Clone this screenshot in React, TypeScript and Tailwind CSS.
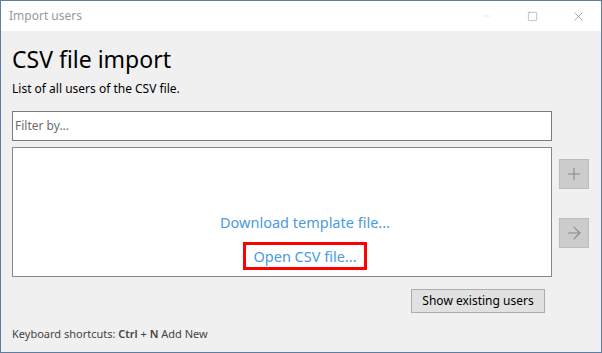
import { Minus, Square, X, Plus, ArrowRight } from "lucide-react";

const font = "font-['Noto_Sans','Open_Sans',sans-serif]";

export default function App() {
  return (
    <div className={`w-[602px] h-[353px] border border-[#5d7f9f] bg-[#f0f0f0] flex flex-col ${font}`}>
      {/* Title bar */}
      <div className="h-[30px] bg-white flex items-center justify-between pl-2">
        <span className="text-[12px] text-[#999999]">Import users</span>
        <div className="flex h-full">
          <div className="w-[46px] flex items-center justify-center text-[#d0d0d0]">
            <Minus size={12} strokeWidth={1} />
          </div>
          <div className="w-[46px] flex items-center justify-center text-[#777777]">
            <Square size={11} strokeWidth={1} />
          </div>
          <div className="w-[46px] flex items-center justify-center text-[#777777]">
            <X size={15} strokeWidth={1} />
          </div>
        </div>
      </div>

      {/* Body */}
      <div className="flex-1 flex flex-col pl-[11px] pr-[12px]">
        <h1 className="text-[23px] leading-[30px] text-black mt-[13px]">CSV file import</h1>
        <p className="text-[12px] leading-[16px] text-black mt-[7px]">List of all users of the CSV file.</p>

        <div className="flex gap-[7px] mt-[14px]">
          <div className="flex flex-col gap-[6px] w-[540px]">
            <div className="h-[30px] bg-white border border-[#7a7a7a] flex items-center px-[2px]">
              <span className="text-[12px] text-[#6d6d6d]">Filter by...</span>
            </div>
            {/* list with the link actions */}
            <div className="h-[130px] bg-white border border-[#828790] flex flex-col items-center justify-end pb-[6px] pl-[46px]">
              <span className="text-[14.5px] leading-[20px] text-[#4a9be0]">Download template file...</span>
              <div className="mt-[10px] border-[3px] border-[#ff0000] px-[7px] h-[28px] flex items-center">
                <span className="text-[14.5px] leading-[20px] text-[#4a9be0]">Open CSV file...</span>
              </div>
            </div>
          </div>
          <div className="flex flex-col gap-[29px] pt-[48px]">
            <div className="w-[30px] h-[30px] bg-[#cccccc] border border-[#bdbdbd] flex items-center justify-center text-[#8a8a8a]">
              <Plus size={20} strokeWidth={1.3} />
            </div>
            <div className="w-[30px] h-[30px] bg-[#cccccc] border border-[#bdbdbd] flex items-center justify-center text-[#8a8a8a]">
              <ArrowRight size={20} strokeWidth={1.3} />
            </div>
          </div>
        </div>

        <div className="flex justify-end pr-[44px] mt-[12px]">
          <div className="w-[134px] h-[24px] bg-[#e1e1e1] border border-[#adadad] flex items-center justify-center">
            <span className="text-[12px] text-black">Show existing users</span>
          </div>
        </div>

        <div className="mt-auto mb-[10px] text-[11px] text-[#444444]">
          Keyboard shortcuts: <b className="font-semibold">Ctrl</b> + <b className="font-semibold">N</b> Add New
        </div>
      </div>
    </div>
  );
}
